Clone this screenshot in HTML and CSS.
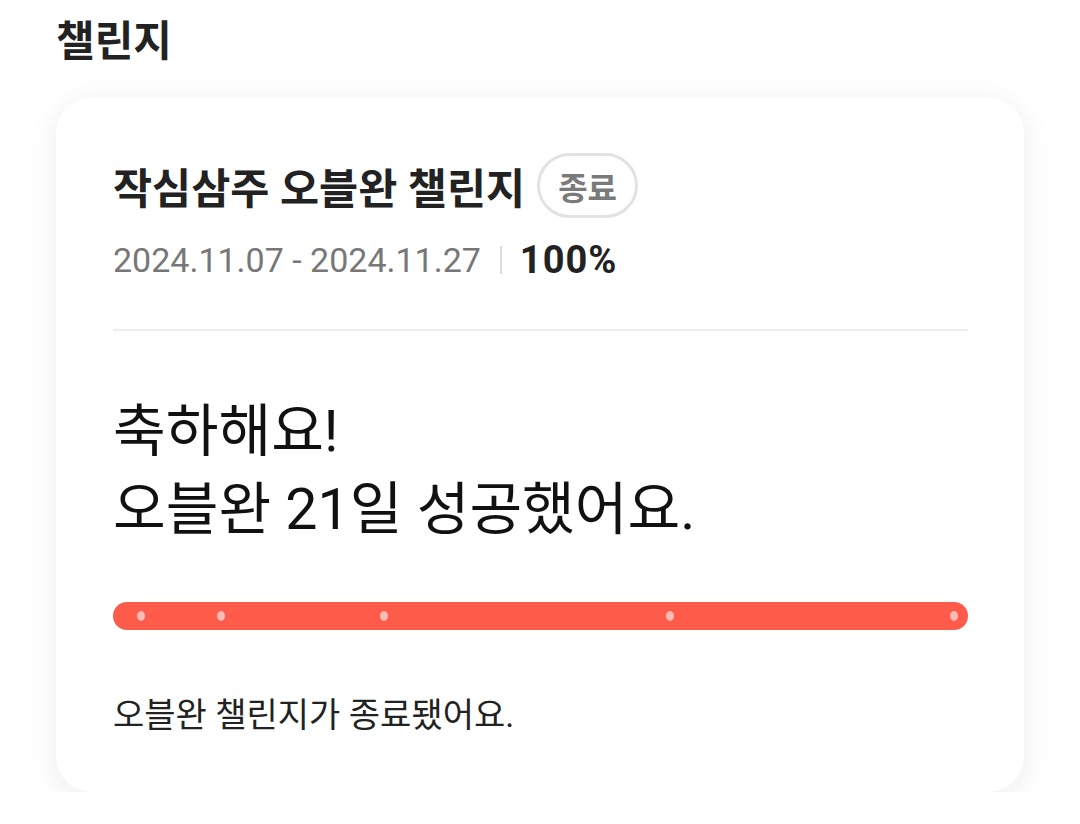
FILE: index.html
```html
<!DOCTYPE html>
<html lang="ko">

<head>
    <meta charset="UTF-8">
    <meta name="viewport" content="width=device-width, initial-scale=1.0">
    <title>챌린지</title>
    <link rel="stylesheet" href="styles.css">
</head>

<body>
    <div class="page">
        <h2 class="section-title">챌린지</h2>

        <div class="card">
            <div class="card-head">
                <span class="challenge-name">작심삼주 오블완 챌린지</span>
                <span class="badge">종료</span>
            </div>
            <div class="meta">
                <span class="period">2024.11.07 - 2024.11.27</span>
                <span class="sep"></span>
                <span class="rate">100%</span>
            </div>

            <hr class="divider">

            <p class="congrats">축하해요!<br>오블완 21일 성공했어요.</p>

            <div class="progress">
                <span class="dot" style="left: 3.3%"></span>
                <span class="dot" style="left: 12.6%"></span>
                <span class="dot" style="left: 31.7%"></span>
                <span class="dot" style="left: 65.1%"></span>
                <span class="dot" style="left: 98.4%"></span>
            </div>

            <p class="notice">오블완 챌린지가 종료됐어요.</p>
        </div>
    </div>
</body>

</html>
```

FILE: styles.css
```css
body {
    margin: 0;
    background-color: #fff;
    font-family: Roboto, "Noto Sans CJK KR", sans-serif;
    color: #222;
}

.page {
    padding: 12px 56px 0 56px;
}

.section-title {
    margin: 0;
    font-size: 42px;
    font-weight: 700;
    line-height: 60px;
    color: #222;
}

.card {
    margin-top: 25px;
    width: 968px;
    height: 695px;
    box-sizing: border-box;
    background-color: #fff;
    border-radius: 36px;
    padding: 56px 56px 0 57px;
    box-shadow: 0 6px 30px rgba(0, 0, 0, 0.08);
}

.card-head {
    display: flex;
    align-items: center;
    gap: 12px;
    height: 65px;
}

.challenge-name {
    font-size: 42.5px;
    font-weight: 700;
    color: #222;
}

.badge {
    display: inline-flex;
    align-items: center;
    justify-content: center;
    height: 65px;
    padding: 0 18px;
    box-sizing: border-box;
    border: 3px solid #e2e2e2;
    border-radius: 33px;
    font-size: 32px;
    font-weight: 700;
    color: #7a7a7a;
}

.meta {
    display: flex;
    align-items: center;
    margin-top: 20px;
    font-size: 34px;
    line-height: 44px;
}

.period {
    color: #777;
}

.sep {
    width: 2px;
    height: 28px;
    background-color: #ddd;
    margin: 0 18px 0 19px;
}

.rate {
    font-weight: 700;
    font-size: 38px;
    letter-spacing: 1px;
    color: #222;
}

.divider {
    margin: 47px 0 0 0;
    border: none;
    height: 2px;
    background-color: #eee;
}

.congrats {
    margin: 62px 0 0 0;
    font-size: 57.3px;
    line-height: 78px;
    color: #111;
}

.progress {
    position: relative;
    height: 28px;
    margin-top: 53px;
    border-radius: 14px;
    background-color: #ff5b4b;
}

.dot {
    position: absolute;
    top: 9px;
    width: 8px;
    height: 10px;
    margin-left: -4px;
    border-radius: 50%;
    background-color: #ffbcb4;
}

.notice {
    margin: 63px 0 0 0;
    font-size: 34px;
    line-height: 44px;
    color: #222;
}
```
